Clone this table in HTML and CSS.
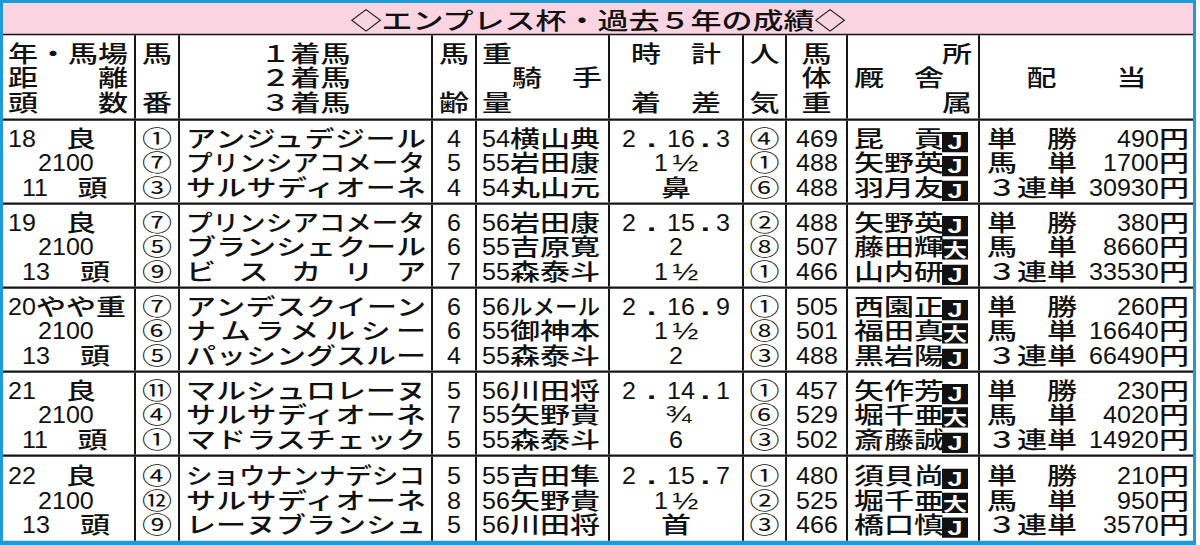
FILE: index.html
```html
<!DOCTYPE html>
<html lang="ja">
<head>
<meta charset="utf-8">
<title>エンプレス杯・過去５年の成績</title>
<link rel="stylesheet" href="styles.css">
</head>
<body>
<div class="viewport">
<div class="sheet">
  <div class="title">◇エンプレス杯・過去５年の成績◇</div>

  <div class="row head">
    <div class="c c1"><div class="l">年・馬場</div><div class="l">距　　離</div><div class="l">頭　　数</div></div>
    <div class="c ctr"><div class="l">馬</div><div class="l"></div><div class="l">番</div></div>
    <div class="c ctr"><div class="l">１着馬</div><div class="l">２着馬</div><div class="l">３着馬</div></div>
    <div class="c ctr"><div class="l">馬</div><div class="l"></div><div class="l">齢</div></div>
    <div class="c c5"><div class="l">重</div><div class="l">　騎　手</div><div class="l">量</div></div>
    <div class="c ctr"><div class="l">時　計</div><div class="l"></div><div class="l">着　差</div></div>
    <div class="c ctr"><div class="l">人</div><div class="l"></div><div class="l">気</div></div>
    <div class="c ctr"><div class="l">馬</div><div class="l">体</div><div class="l">重</div></div>
    <div class="c c9"><div class="l r">所</div><div class="l">厩　舎</div><div class="l r">属</div></div>
    <div class="c ctr"><div class="l"></div><div class="l">配　　当</div><div class="l"></div></div>
  </div>

  <div class="row">
    <div class="c c1"><div class="l"><span class="n n2">18</span>　良</div><div class="l y2"><span class="n n4">2100</span></div><div class="l y3"><span class="n n2">11</span>　頭</div></div>
    <div class="c ctr cir"><div class="l">①</div><div class="l">⑦</div><div class="l">③</div></div>
    <div class="c c3"><div class="l nm">アンジュデジール</div><div class="l nm"><span class="sq9">プリンシアコメータ</span></div><div class="l nm">サルサディオーネ</div></div>
    <div class="c ctr"><div class="l"><span class="n n1">4</span></div><div class="l"><span class="n n1">5</span></div><div class="l"><span class="n n1">4</span></div></div>
    <div class="c c5"><div class="l"><span class="n n2">54</span>横山典</div><div class="l"><span class="n n2">55</span>岩田康</div><div class="l"><span class="n n2">54</span>丸山元</div></div>
    <div class="c ctr"><div class="l"><span class="n n1">2</span><span class="d1">.</span><span class="n n2">16</span><span class="d2">.</span><span class="n n1">3</span></div><div class="l"><span class="n n1">1</span><span class="fr">½</span></div><div class="l">鼻</div></div>
    <div class="c ctr cir"><div class="l">④</div><div class="l">①</div><div class="l">⑥</div></div>
    <div class="c ctr"><div class="l"><span class="n n3">469</span></div><div class="l"><span class="n n3">488</span></div><div class="l"><span class="n n3">488</span></div></div>
    <div class="c c9"><div class="l">昆　貢<span class="bj">J</span></div><div class="l">矢野英<span class="bj">J</span></div><div class="l">羽月友<span class="bj">J</span></div></div>
    <div class="c c10"><div class="l pay"><span>単　勝</span><span><span class="n n3">490</span>円</span></div><div class="l pay"><span>馬　単</span><span><span class="n n4">1700</span>円</span></div><div class="l pay"><span>３連単</span><span><span class="n n5">30930</span>円</span></div></div>
  </div>

  <div class="row">
    <div class="c c1"><div class="l"><span class="n n2">19</span>　良</div><div class="l y2"><span class="n n4">2100</span></div><div class="l y3"><span class="n n2">13</span>　頭</div></div>
    <div class="c ctr cir"><div class="l">⑦</div><div class="l">⑤</div><div class="l">⑨</div></div>
    <div class="c c3"><div class="l nm"><span class="sq9">プリンシアコメータ</span></div><div class="l nm">ブランシェクール</div><div class="l nm">ビスカリア</div></div>
    <div class="c ctr"><div class="l"><span class="n n1">6</span></div><div class="l"><span class="n n1">6</span></div><div class="l"><span class="n n1">7</span></div></div>
    <div class="c c5"><div class="l"><span class="n n2">56</span>岩田康</div><div class="l"><span class="n n2">55</span>吉原寛</div><div class="l"><span class="n n2">55</span>森泰斗</div></div>
    <div class="c ctr"><div class="l"><span class="n n1">2</span><span class="d1">.</span><span class="n n2">15</span><span class="d2">.</span><span class="n n1">3</span></div><div class="l"><span class="n n1">2</span></div><div class="l"><span class="n n1">1</span><span class="fr">½</span></div></div>
    <div class="c ctr cir"><div class="l">②</div><div class="l">⑧</div><div class="l">①</div></div>
    <div class="c ctr"><div class="l"><span class="n n3">488</span></div><div class="l"><span class="n n3">507</span></div><div class="l"><span class="n n3">466</span></div></div>
    <div class="c c9"><div class="l">矢野英<span class="bj">J</span></div><div class="l">藤田輝<span class="bd">大</span></div><div class="l">山内研<span class="bj">J</span></div></div>
    <div class="c c10"><div class="l pay"><span>単　勝</span><span><span class="n n3">380</span>円</span></div><div class="l pay"><span>馬　単</span><span><span class="n n4">8660</span>円</span></div><div class="l pay"><span>３連単</span><span><span class="n n5">33530</span>円</span></div></div>
  </div>

  <div class="row">
    <div class="c c1"><div class="l"><span class="n n2">20</span>やや重</div><div class="l y2"><span class="n n4">2100</span></div><div class="l y3"><span class="n n2">13</span>　頭</div></div>
    <div class="c ctr cir"><div class="l">⑦</div><div class="l">⑥</div><div class="l">⑤</div></div>
    <div class="c c3"><div class="l nm">アンデスクイーン</div><div class="l nm">ナムラメルシー</div><div class="l nm">パッシングスルー</div></div>
    <div class="c ctr"><div class="l"><span class="n n1">6</span></div><div class="l"><span class="n n1">6</span></div><div class="l"><span class="n n1">4</span></div></div>
    <div class="c c5"><div class="l"><span class="n n2">56</span><span class="sq4">ルメール</span></div><div class="l"><span class="n n2">55</span>御神本</div><div class="l"><span class="n n2">55</span>森泰斗</div></div>
    <div class="c ctr"><div class="l"><span class="n n1">2</span><span class="d1">.</span><span class="n n2">16</span><span class="d2">.</span><span class="n n1">9</span></div><div class="l"><span class="n n1">1</span><span class="fr">½</span></div><div class="l"><span class="n n1">2</span></div></div>
    <div class="c ctr cir"><div class="l">①</div><div class="l">⑧</div><div class="l">③</div></div>
    <div class="c ctr"><div class="l"><span class="n n3">505</span></div><div class="l"><span class="n n3">501</span></div><div class="l"><span class="n n3">488</span></div></div>
    <div class="c c9"><div class="l">西園正<span class="bj">J</span></div><div class="l">福田真<span class="bd">大</span></div><div class="l">黒岩陽<span class="bj">J</span></div></div>
    <div class="c c10"><div class="l pay"><span>単　勝</span><span><span class="n n3">260</span>円</span></div><div class="l pay"><span>馬　単</span><span><span class="n n5">16640</span>円</span></div><div class="l pay"><span>３連単</span><span><span class="n n5">66490</span>円</span></div></div>
  </div>

  <div class="row">
    <div class="c c1"><div class="l"><span class="n n2">21</span>　良</div><div class="l y2"><span class="n n4">2100</span></div><div class="l y3"><span class="n n2">11</span>　頭</div></div>
    <div class="c ctr cir"><div class="l">⑪</div><div class="l">④</div><div class="l">①</div></div>
    <div class="c c3"><div class="l nm">マルシュロレーヌ</div><div class="l nm">サルサディオーネ</div><div class="l nm">マドラスチェック</div></div>
    <div class="c ctr"><div class="l"><span class="n n1">5</span></div><div class="l"><span class="n n1">7</span></div><div class="l"><span class="n n1">5</span></div></div>
    <div class="c c5"><div class="l"><span class="n n2">56</span>川田将</div><div class="l"><span class="n n2">55</span>矢野貴</div><div class="l"><span class="n n2">55</span>森泰斗</div></div>
    <div class="c ctr"><div class="l"><span class="n n1">2</span><span class="d1">.</span><span class="n n2">14</span><span class="d2">.</span><span class="n n1">1</span></div><div class="l"><span class="fr">¾</span></div><div class="l"><span class="n n1">6</span></div></div>
    <div class="c ctr cir"><div class="l">①</div><div class="l">⑥</div><div class="l">③</div></div>
    <div class="c ctr"><div class="l"><span class="n n3">457</span></div><div class="l"><span class="n n3">529</span></div><div class="l"><span class="n n3">502</span></div></div>
    <div class="c c9"><div class="l">矢作芳<span class="bj">J</span></div><div class="l">堀千亜<span class="bd">大</span></div><div class="l">斎藤誠<span class="bj">J</span></div></div>
    <div class="c c10"><div class="l pay"><span>単　勝</span><span><span class="n n3">230</span>円</span></div><div class="l pay"><span>馬　単</span><span><span class="n n4">4020</span>円</span></div><div class="l pay"><span>３連単</span><span><span class="n n5">14920</span>円</span></div></div>
  </div>

  <div class="row last">
    <div class="c c1"><div class="l"><span class="n n2">22</span>　良</div><div class="l y2"><span class="n n4">2100</span></div><div class="l y3"><span class="n n2">13</span>　頭</div></div>
    <div class="c ctr cir"><div class="l">④</div><div class="l">⑫</div><div class="l">⑨</div></div>
    <div class="c c3"><div class="l nm"><span class="sq9">ショウナンナデシコ</span></div><div class="l nm">サルサディオーネ</div><div class="l nm">レーヌブランシュ</div></div>
    <div class="c ctr"><div class="l"><span class="n n1">5</span></div><div class="l"><span class="n n1">8</span></div><div class="l"><span class="n n1">5</span></div></div>
    <div class="c c5"><div class="l"><span class="n n2">55</span>吉田隼</div><div class="l"><span class="n n2">56</span>矢野貴</div><div class="l"><span class="n n2">56</span>川田将</div></div>
    <div class="c ctr"><div class="l"><span class="n n1">2</span><span class="d1">.</span><span class="n n2">15</span><span class="d2">.</span><span class="n n1">7</span></div><div class="l"><span class="n n1">1</span><span class="fr">½</span></div><div class="l">首</div></div>
    <div class="c ctr cir"><div class="l">①</div><div class="l">②</div><div class="l">③</div></div>
    <div class="c ctr"><div class="l"><span class="n n3">480</span></div><div class="l"><span class="n n3">525</span></div><div class="l"><span class="n n3">466</span></div></div>
    <div class="c c9"><div class="l">須貝尚<span class="bj">J</span></div><div class="l">堀千亜<span class="bd">大</span></div><div class="l">橋口慎<span class="bj">J</span></div></div>
    <div class="c c10"><div class="l pay"><span>単　勝</span><span><span class="n n3">210</span>円</span></div><div class="l pay"><span>馬　単</span><span><span class="n n3">950</span>円</span></div><div class="l pay"><span>３連単</span><span><span class="n n4">3570</span>円</span></div></div>
  </div>
</div>
</div>
</body>
</html>
```

FILE: styles.css
```css
html, body {
  margin: 0;
  padding: 0;
  background: #fff;
}

.viewport {
  width: 1200px;
  height: 545px;
  overflow: hidden;
}

.sheet {
  width: 1190px;
  border-style: solid;
  border-color: #1e9ad6;
  border-width: 4px 3px 6px 3px;
  transform: scaleY(0.75);
  transform-origin: 0 0;
  background: #fff;
  color: #111;
  font-family: "Noto Sans CJK JP", "Noto Sans", sans-serif;
  font-size: 30px;
  font-weight: 500;
}

.title {
  height: 41px;
  line-height: 41px;
  background: #fad4e0;
  border-bottom: 2px solid #161616;
  text-align: center;
  font-size: 31px;
}

.row {
  display: grid;
  grid-template-columns: 131px 44px 253px 44px 133px 134px 43px 61px 132px 215px;
  height: 112px;
  box-sizing: border-box;
  border-bottom: 3px solid #161616;
}

.row.head {
  height: 114px;
}

.row.last {
  border-bottom: none;
}

.c {
  display: flex;
  flex-direction: column;
  justify-content: center;
  border-left: 2px solid #161616;
  box-sizing: border-box;
  padding: 0 4px;
  min-width: 0;
}

.c:first-child {
  border-left: none;
}

.l {
  height: 32.5px;
  line-height: 32.5px;
  white-space: nowrap;
}

.ctr {
  text-align: center;
  padding: 0;
}

.cir {
  font-weight: 400;
}

.c1 { padding: 0 0 0 5px; }
.y2 { padding-left: 30px; }
.y3 { padding-left: 14px; }

.c3 { padding: 0 5px 0 6px; }
.nm {
  text-align: justify;
  text-align-last: justify;
}

.c5 { padding: 0 0 0 5px; }
.c9 { padding: 0 6px 0 6px; }
.r { text-align: right; }

.c10 { padding: 0 4px 0 7px; }
.pay {
  display: flex;
  justify-content: space-between;
}

/* narrow numerals */
.n {
  display: inline-block;
  font-family: "Liberation Sans", sans-serif;
  font-size: 33px;
  font-weight: 400;
  transform: scaleX(0.76);
  transform-origin: 0 50%;
}
.n1 { margin-right: -4.4px; }
.n2 { margin-right: -8.8px; }
.n3 { margin-right: -13.2px; }
.n4 { margin-right: -17.6px; }
.n5 { margin-right: -22px; }

.fr {
  font-family: "Liberation Sans", sans-serif;
  font-size: 31px;
  font-weight: 400;
  margin-left: 5px;
}

.d1, .d2 {
  display: inline-block;
  text-align: center;
  font-family: "Liberation Sans", sans-serif;
  font-size: 33px;
  font-weight: 700;
}
.d1 { width: 31px; }
.d2 { width: 21px; }

.sq9 {
  display: inline-block;
  transform: scaleX(0.885);
  transform-origin: 0 50%;
  margin-right: -31px;
}

.sq4 {
  display: inline-block;
  transform: scaleX(0.75);
  transform-origin: 0 50%;
  margin-right: -30px;
}

.bj, .bd {
  display: inline-block;
  width: 26px;
  height: 27px;
  margin-left: -2px;
  background: #111;
  color: #fff;
  text-align: center;
  vertical-align: -3px;
}

.bj {
  font-family: "Liberation Sans", sans-serif;
  font-weight: 700;
  font-size: 27px;
  line-height: 29px;
}

.bd {
  font-weight: 700;
  font-size: 24px;
  line-height: 27px;
}
```
